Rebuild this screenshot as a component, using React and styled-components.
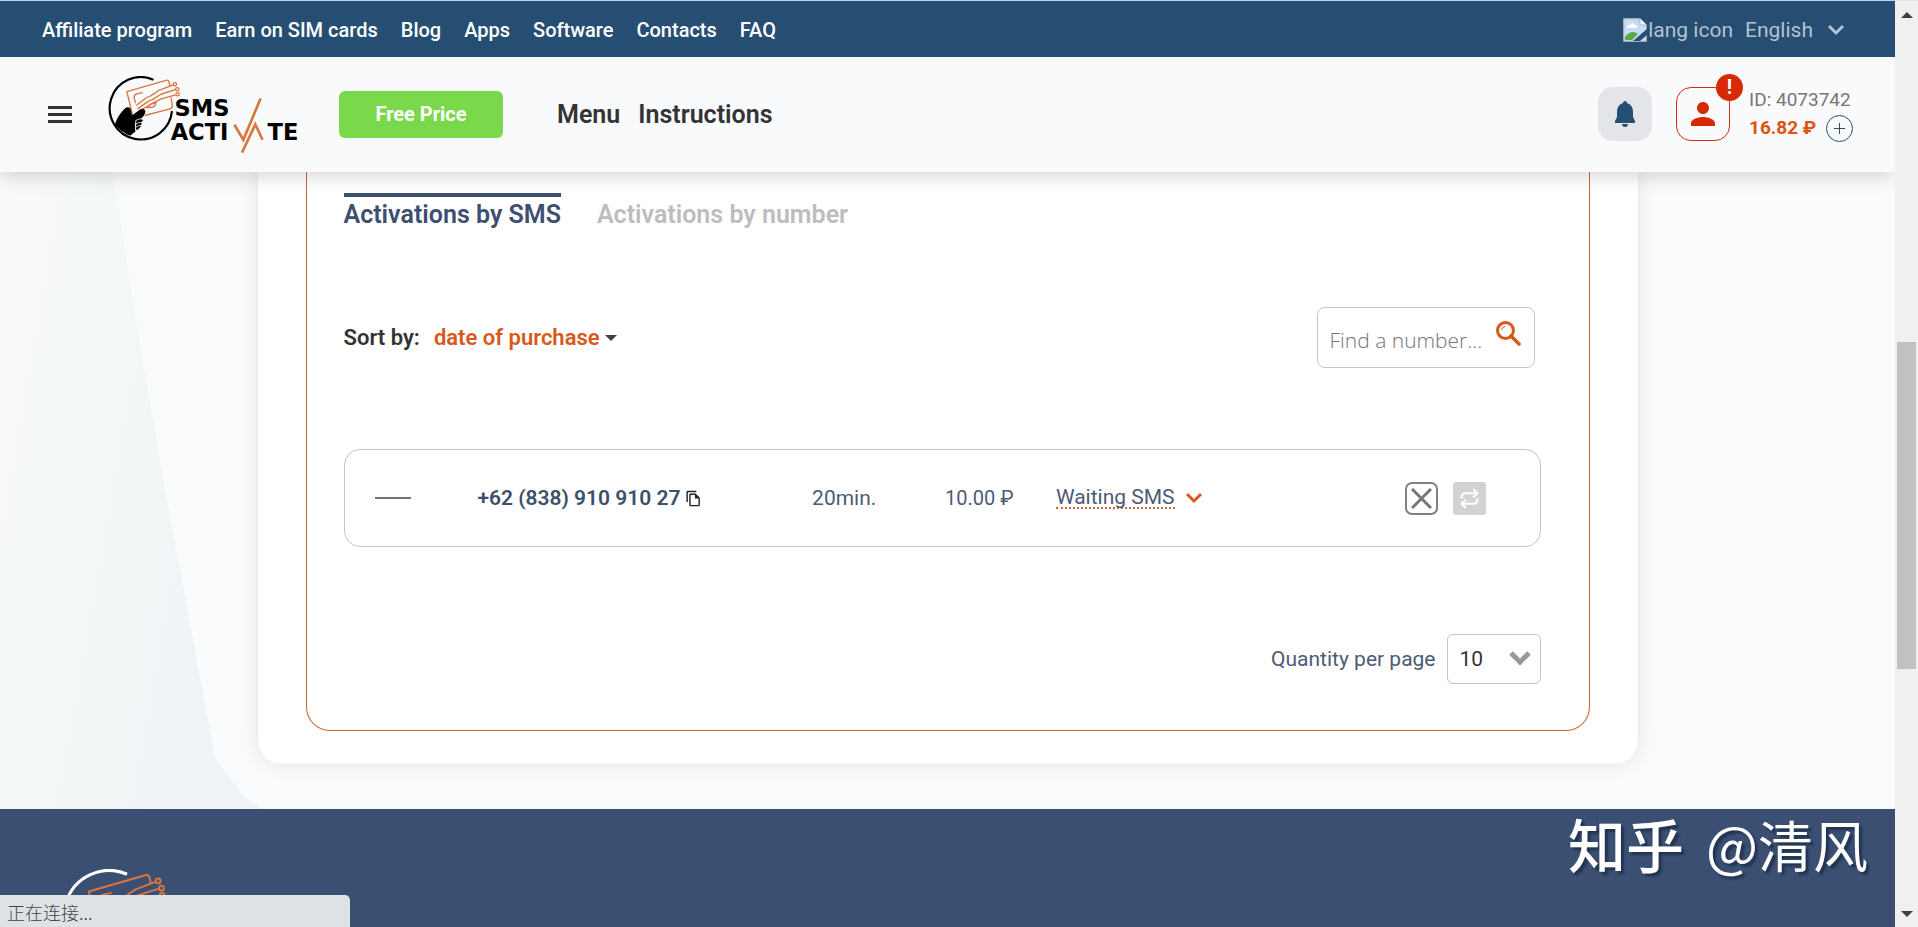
import React from 'react';
import styled, { createGlobalStyle } from 'styled-components';
import { MdPerson, MdOutlineFileCopy } from 'react-icons/md';
import { Repeat } from 'lucide-react';

const Global = createGlobalStyle`
  *, *::before, *::after { box-sizing: border-box; }
  body { margin: 0; font-family: Roboto, "Liberation Sans", "Noto Sans CJK SC", sans-serif; color: #333; }
  button, input, select { font: inherit; color: inherit; margin: 0; }
  button { background: none; border: 0; padding: 0; cursor: pointer; }
  a { color: inherit; text-decoration: none; }
  svg { display: block; flex: none; }
`;

const Window = styled.div`
  display: flex;
  height: 100vh;
  overflow: hidden;
`;
const Page = styled.div`
  flex: 1;
  min-width: 0;
  display: flex;
  flex-direction: column;
`;

const TopBar = styled.div`
  flex: none;
  position: relative;
  z-index: 3;
  display: flex;
  align-items: center;
  justify-content: space-between;
  height: 57px;
  padding: 2px 50px 0 42px;
  border-top: 1px solid #bcd6ea;
  background: #254e72;
  color: #fff;
`;
const TopNav = styled.nav`
  display: flex;
  gap: 23px;
  font-size: 20px;
  font-weight: 500;
`;
const Language = styled.button`
  display: flex;
  align-items: center;
  font-size: 21px;
  color: #b3c2cf;
`;
const LangAlt = styled.span`
  margin: 0 12px 0 1px;
`;
const LangName = styled.span`
  margin-right: 14px;
`;

const Header = styled.header`
  flex: none;
  position: relative;
  z-index: 2;
  display: flex;
  align-items: center;
  height: 115px;
  padding: 0 42px 1px 48px;
  background: #f8fafc;
  box-shadow: 0 2px 20px rgba(0, 0, 0, 0.2);
`;
const Burger = styled.button`
  display: grid;
  gap: 4px;
  width: 24px;
  margin-right: 36px;
`;
const BurgerLine = styled.span`
  height: 3px;
  background: #333;
`;
const FreePrice = styled.button`
  width: 164px;
  height: 47px;
  margin: 0 54px 0 39px;
  border-radius: 6px;
  background: #7ad94a;
  color: #fff;
  font-size: 20px;
  font-weight: 700;
`;
const MainNav = styled.nav`
  display: flex;
  gap: 18px;
  flex: 1;
  font-size: 25px;
  font-weight: 600;
`;
const IconButton = styled.button`
  position: relative;
  display: grid;
  place-items: center;
  width: 54px;
  height: 54px;
  border-radius: 15px;
  margin-right: ${(p) => (p.$alert ? 19 : 24)}px;
  border: ${(p) => (p.$alert ? '1px solid #cf2e12' : '0')};
  background: ${(p) => (p.$alert ? 'transparent' : '#e3e5e9')};
  color: ${(p) => (p.$alert ? '#d62a04' : '#254e72')};
`;
const Badge = styled.span`
  position: absolute;
  top: -14px;
  right: -14px;
  width: 27px;
  height: 27px;
  border-radius: 50%;
  background: #d62a04;
  color: #fff;
  font-size: 20px;
  font-weight: 700;
  line-height: 27px;
`;
const Account = styled.div`
  width: 104px;
  font-size: 19px;
  line-height: 28px;
  color: #777;
  white-space: nowrap;
`;
const Balance = styled.div`
  display: flex;
  align-items: center;
  justify-content: space-between;
  color: #dc550e;
  font-weight: 700;
`;
const TopUp = styled.button`
  display: grid;
  place-items: center;
  width: 27px;
  height: 27px;
  border: 1px solid #254e72;
  border-radius: 50%;
  color: #254e72;
`;

const Main = styled.main`
  flex: none;
  position: relative;
  z-index: 1;
  padding: 0 24px 45px;
  background: #f9fbfc;
  &::before {
    content: '';
    position: absolute;
    z-index: -1;
    left: 0;
    top: 0;
    width: 262px;
    height: 100%;
    background: linear-gradient(100deg, #f8fafa 10%, #eef3f5 80%);
    clip-path: polygon(0 0, 43% 0, 51% 21%, 63% 50%, 78% 83%, 82% 92%, 93% 98%, 100% 100%, 0 100%);
  }
`;
const Card = styled.section`
  max-width: 1380px;
  margin: 0 auto;
  padding: 0 48px 33px;
  border-radius: 0 0 24px 24px;
  background: #fff;
  box-shadow: 0 0 20px rgba(0, 0, 0, 0.1);
`;
const Frame = styled.div`
  padding: 21px 48px 46px 37px;
  border: 1px solid #c9662f;
  border-top: 0;
  border-radius: 0 0 24px 24px;
`;
const Tabs = styled.div`
  display: flex;
  gap: 36px;
`;
const Tab = styled.button`
  height: 38px;
  border-top: 4px solid ${(p) => (p.$active ? '#3d4f70' : 'transparent')};
  color: ${(p) => (p.$active ? '#3d4f70' : '#bdbdbd')};
  font-size: 25px;
  font-weight: 600;
`;
const Tools = styled.div`
  display: flex;
  align-items: center;
  justify-content: space-between;
  padding: 76px 6px 81px 0;
`;
const Sort = styled.div`
  display: flex;
  align-items: center;
  font-size: 22px;
  font-weight: 600;
`;
const SortButton = styled.button`
  display: flex;
  align-items: center;
  gap: 5px;
  margin-left: 14px;
  color: #d9581c;
`;
const Search = styled.form`
  display: flex;
  align-items: center;
  width: 218px;
  height: 61px;
  padding: 0 13px 0 12px;
  border: 1px solid #c4c4c4;
  border-radius: 8px;
`;
const SearchInput = styled.input`
  flex: 1;
  min-width: 0;
  padding: 4px 0 0;
  border: 0;
  outline: 0;
  background: none;
  font-family: "Open Sans", "Noto Sans", sans-serif;
  font-size: 21px;
  font-weight: 300;
  &::placeholder { color: #757575; opacity: 1; }
`;
const SearchButton = styled.button`
  padding-bottom: 8px;
`;
const List = styled.ul`
  margin: 0;
  padding: 0;
  list-style: none;
`;
const Row = styled.li`
  display: grid;
  grid-template-columns: 103fr 335fr 133fr 111fr 430fr;
  align-items: center;
  height: 98px;
  padding: 0 54px 0 30px;
  border: 1px solid #c4c4c4;
  border-radius: 16px;
  color: #4d5b75;
  font-size: 21px;
`;
const Dash = styled.span`
  width: 36px;
  height: 2px;
  background: #6b7480;
`;
const Phone = styled.span`
  display: flex;
  align-items: center;
  gap: 5px;
  color: #3d4f6b;
  font-weight: 600;
`;
const Price = styled.span`
  font-size: 20px;
`;
const CopyButton = styled.button`
  color: #222;
`;
const StatusCell = styled.div`
  display: flex;
  align-items: center;
  justify-content: space-between;
`;
const Status = styled.button`
  display: flex;
  align-items: center;
  gap: 10px;
`;
const StatusText = styled.span`
  border-bottom: 2px dotted #c9662f;
  line-height: 20px;
`;
const Actions = styled.div`
  display: flex;
  gap: 15px;
`;
const Action = styled.button`
  display: grid;
  place-items: center;
  width: 33px;
  height: 33px;
  border: ${(p) => (p.$filled ? '0' : '2px solid #808080')};
  border-radius: ${(p) => (p.$filled ? 3 : 7)}px;
  background: ${(p) => (p.$filled ? '#d2d2d2' : 'transparent')};
  color: ${(p) => (p.$filled ? '#fff' : '#777')};
`;
const Pager = styled.div`
  display: flex;
  align-items: center;
  justify-content: flex-end;
  gap: 11px;
  margin-top: 87px;
  color: #4d5b75;
  font-size: 21px;
`;
const SelectBox = styled.div`
  position: relative;
  width: 94px;
  height: 50px;
`;
const Select = styled.select`
  appearance: none;
  width: 100%;
  height: 100%;
  padding: 0 12px;
  border: 1px solid #c4c4c4;
  border-radius: 6px;
  background: transparent;
  color: #333;
`;
const SelectArrow = styled.svg`
  position: absolute;
  right: 10px;
  top: 16px;
  pointer-events: none;
`;

const Footer = styled.footer`
  flex: 1;
  min-height: 118px;
  padding: 60px 62px 0;
  overflow: hidden;
  background: #3a4f71;
`;
const StatusBubble = styled.div`
  position: fixed;
  z-index: 3;
  left: 0;
  bottom: 0;
  width: 350px;
  height: 32px;
  padding-left: 7px;
  border-radius: 0 5px 0 0;
  background: #dee1e6;
  color: #444;
  font-family: "Noto Sans CJK SC", sans-serif;
  font-size: 18px;
  font-weight: 300;
  line-height: 34px;
`;
const Watermark = styled.div`
  position: fixed;
  z-index: 3;
  right: 50px;
  bottom: 44px;
  display: flex;
  align-items: center;
  gap: 22px;
  color: #fff;
  font-family: "Noto Sans CJK SC", sans-serif;
  font-size: 55px;
  line-height: 80px;
  text-shadow: 3px 3px 2px rgba(20, 35, 60, 0.6);
`;
const Brand = styled.span`
  font-size: 58px;
  font-weight: 500;
`;

const Scrollbar = styled.div`
  flex: none;
  position: relative;
  z-index: 3;
  display: flex;
  flex-direction: column;
  align-items: center;
  width: 23px;
  padding: 11px 0 10px;
  border-top: 1px solid #dbe4ea;
  background: #f0f0f0;
`;
const Track = styled.div`
  flex: 1;
  display: flex;
  flex-direction: column;
  width: 19px;
`;
const TrackSpace = styled.div`
  flex: ${(p) => p.$size};
`;
const Thumb = styled.div`
  flex: 326;
  background: #c1c1c1;
`;

function Logo({ width, height, ink, paper, wordmark }) {
  return (
    <svg width={width} height={height} viewBox="54 44 577 232" fill="none" role="img" aria-label="SMS Activate">
      <path d="M190 55A94 94 0 1 0 246 150" stroke={ink} strokeWidth="6.5" />
      <g stroke="#d9773f" strokeWidth="4" strokeLinejoin="round">
        <path d="M127 160L110 91L228 57Q235 55 237 62L240 76M243 108L247 132Q248 140 240 143L164 163" />
        <path d="M136 126L132 108Q132 99 142 97L158 94M138 133L166 112Q172 107 182 104L207 87L249 71" />
        <path d="M142 143L172 122Q178 117 186 116L213 99L256 85M146 151L182 129L214 113L257 101" />
        <path d="M170 139Q182 128 198 123Q197 138 181 139Z" />
        <circle cx="255" cy="69" r="5" /><circle cx="262" cy="84" r="5" /><circle cx="263" cy="99" r="5" />
      </g>
      <path d="M74 190Q82 163 104 142Q114 135 121 142L126 162L151 144Q164 140 166 151Q164 164 150 175L134 188L136 211L120 224Q94 214 74 190Z" fill={ink} />
      <path d="M137 178Q147 171 158 174Q163 180 153 184Q160 188 152 193Q156 198 148 201Q148 208 136 207Z" fill={ink} stroke={paper} strokeWidth="2.5" />
      <path d="M136 190Q145 183 152 184M137 199Q145 192 152 193" stroke={paper} strokeWidth="2.5" />
      {wordmark && (
        <>
          <g fill={ink} fontFamily="DejaVu Sans, sans-serif" fontWeight="700">
            <text x="254" y="165" fontSize="68">SMS</text>
            <text x="242" y="236" fontSize="68">ACTI</text>
            <text x="534" y="236" fontSize="68">TE</text>
          </g>
          <g stroke="#d9773f" strokeWidth="8">
            <path d="M434 191L461 236L513 112" />
            <path d="M457 275L497 190L519 236" />
          </g>
        </>
      )}
    </svg>
  );
}

const BrokenImage = () => (
  <svg width="24" height="24" viewBox="0 0 24 24">
    <path d="M1 1H17L23 7V23H1Z" fill="#c6dcf5" stroke="#c7cbd0" strokeWidth="1.5" />
    <path d="M4 10Q4 7 7 7Q9 3 12 7Q15 8 14 10Z" fill="#fff" />
    <path d="M2 22V19Q8 11 15 16L9 22Z" fill="#58ab45" />
    <path d="M10 23L24 11V17L17 23Z" fill="#254e72" />
    <path d="M17 1V7H23" fill="#fff" stroke="#a6abb2" />
  </svg>
);
const Chevron = ({ color = 'currentColor' }) => (
  <svg width="18" height="12" viewBox="0 0 18 12" fill="none" stroke={color} strokeWidth="3">
    <path d="M2 2L9 9L16 2" />
  </svg>
);
const Bell = () => (
  <svg width="22" height="26" viewBox="0 0 22 26" fill="currentColor">
    <path d="M9 2Q9 0 11 0Q13 0 13 2Q19 4 19 11V16L21 20V22H1V20L3 16V11Q3 4 9 2ZM8 23H14Q14 26 11 26Q8 26 8 23Z" />
  </svg>
);
const Magnifier = () => (
  <svg width="25" height="25" viewBox="0 0 25 25" fill="none" stroke="#d9581c">
    <circle cx="9.5" cy="9.5" r="8" strokeWidth="3" />
    <path d="M5.5 9Q6 6 9 5.5" strokeWidth="1" />
    <path d="M15 15L23 23" strokeWidth="3.5" strokeLinecap="round" />
  </svg>
);
const Triangle = ({ up }) => (
  <svg width="12" height="6" viewBox="0 0 12 6" fill="#404040">
    <path d={up ? 'M0 6L6 0L12 6Z' : 'M0 0H12L6 6Z'} />
  </svg>
);

const topLinks = ['Affiliate program', 'Earn on SIM cards', 'Blog', 'Apps', 'Software', 'Contacts', 'FAQ'];

export default function App() {
  return (
    <>
      <Global />
      <Window>
        <Page>
          <TopBar>
            <TopNav>{topLinks.map((t) => <a href="#" key={t}>{t}</a>)}</TopNav>
            <Language>
              <BrokenImage />
              <LangAlt>lang icon</LangAlt>
              <LangName>English</LangName>
              <Chevron />
            </Language>
          </TopBar>
          <Header>
            <Burger aria-label="Open menu"><BurgerLine /><BurgerLine /><BurgerLine /></Burger>
            <a href="#"><Logo width={192} height={77} ink="#000" paper="#f8fafc" wordmark /></a>
            <FreePrice>Free Price</FreePrice>
            <MainNav>
              <a href="#">Menu</a>
              <a href="#">Instructions</a>
            </MainNav>
            <IconButton aria-label="Notifications"><Bell /></IconButton>
            <IconButton $alert aria-label="Profile">
              <MdPerson size={36} />
              <Badge>!</Badge>
            </IconButton>
            <Account>
              ID: 4073742
              <Balance>
                16.82 ₽
                <TopUp aria-label="Top up">
                  <svg width="11" height="11" viewBox="0 0 11 11" stroke="currentColor"><path d="M5.5 0V11M0 5.5H11" /></svg>
                </TopUp>
              </Balance>
            </Account>
          </Header>
          <Main>
            <Card>
              <Frame>
                <Tabs>
                  <Tab $active>Activations by SMS</Tab>
                  <Tab>Activations by number</Tab>
                </Tabs>
                <Tools>
                  <Sort>
                    Sort by:
                    <SortButton>date of purchase <Triangle /></SortButton>
                  </Sort>
                  <Search>
                    <SearchInput type="text" placeholder="Find a number..." aria-label="Find a number" />
                    <SearchButton type="button" aria-label="Search"><Magnifier /></SearchButton>
                  </Search>
                </Tools>
                <List>
                  <Row>
                    <Dash />
                    <Phone>
                      +62 (838) 910 910 27
                      <CopyButton aria-label="Copy number"><MdOutlineFileCopy size={17} /></CopyButton>
                    </Phone>
                    <span>20min.</span>
                    <Price>10.00 ₽</Price>
                    <StatusCell>
                      <Status>
                        <StatusText>Waiting SMS</StatusText>
                        <Chevron color="#d9581c" />
                      </Status>
                      <Actions>
                        <Action aria-label="Cancel">
                          <svg width="21" height="21" viewBox="0 0 21 21" stroke="currentColor" strokeWidth="3"><path d="M1 1L20 20M20 1L1 20" /></svg>
                        </Action>
                        <Action $filled aria-label="Repeat"><Repeat size={21} strokeWidth={2.5} /></Action>
                      </Actions>
                    </StatusCell>
                  </Row>
                </List>
                <Pager>
                  <label htmlFor="per-page">Quantity per page</label>
                  <SelectBox>
                    <Select id="per-page" defaultValue="10">
                      <option>10</option>
                      <option>25</option>
                      <option>50</option>
                    </Select>
                    <SelectArrow width="22" height="16" viewBox="0 0 22 16" fill="none" stroke="#999" strokeWidth="5">
                      <path d="M2 3L11 12L20 3" />
                    </SelectArrow>
                  </SelectBox>
                </Pager>
              </Frame>
            </Card>
          </Main>
          <Footer>
            <Logo width={276} height={111} ink="#fff" paper="#3a4f71" />
          </Footer>
        </Page>
        <Scrollbar>
          <Triangle up />
          <Track>
            <TrackSpace $size={324} />
            <Thumb />
            <TrackSpace $size={242} />
          </Track>
          <Triangle />
        </Scrollbar>
      </Window>
      <StatusBubble>正在连接...</StatusBubble>
      <Watermark><Brand>知乎</Brand><span>@清风</span></Watermark>
    </>
  );
}
